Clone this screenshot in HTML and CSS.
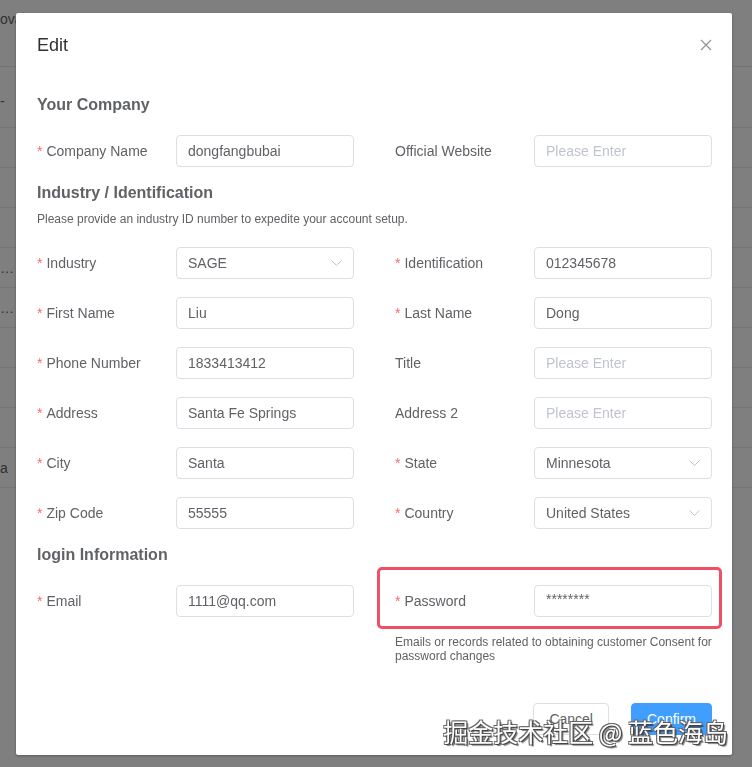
FILE: index.html
```html
<!DOCTYPE html>
<html lang="en">
<head>
<meta charset="utf-8">
<title>Edit customer</title>
<link rel="stylesheet" href="styles.css">
</head>
<body>
  <!-- list page behind the dialog -->
  <div class="page">
    <div class="list-row list-head"><span class="cell">ova</span></div>
    <div class="list-row list-tall"><span class="cell">-</span></div>
    <div class="list-row"><span class="cell"></span></div>
    <div class="list-row"><span class="cell"></span></div>
    <div class="list-row"><span class="cell"></span></div>
    <div class="list-row"><span class="cell">…</span></div>
    <div class="list-row"><span class="cell">…</span></div>
    <div class="list-row"><span class="cell"></span></div>
    <div class="list-row"><span class="cell"></span></div>
    <div class="list-row"><span class="cell"></span></div>
    <div class="list-row"><span class="cell">a</span></div>
  </div>

  <div class="mask">
    <div class="dialog">
      <div class="dialog-header">
        <span class="dialog-title">Edit</span>
        <button class="dialog-close" type="button" aria-label="Close">
          <svg width="12" height="12" viewBox="0 0 12 12"><path d="M1 1 L11 11 M11 1 L1 11" stroke="#909399" stroke-width="1.2" fill="none"/></svg>
        </button>
      </div>

      <div class="dialog-body">
        <h3 class="section-title">Your Company</h3>
        <div class="form-grid gap-19">
          <div class="field">
            <label class="field-label required">Company Name</label>
            <input class="input" type="text" value="dongfangbubai" readonly>
          </div>
          <div class="field">
            <label class="field-label">Official Website</label>
            <input class="input" type="text" placeholder="Please Enter" readonly>
          </div>
        </div>

        <h3 class="section-title mt-15">Industry / Identification</h3>
        <p class="section-desc">Please provide an industry ID number to expedite your account setup.</p>
        <div class="form-grid gap-20">
          <div class="field">
            <label class="field-label required">Industry</label>
            <div class="select">
              <input class="input" type="text" value="SAGE" readonly>
              <svg class="select-arrow" width="11" height="6" viewBox="0 0 11 6"><path d="M0.5 0.5 L5.5 5.5 L10.5 0.5" stroke="#c0c4cc" stroke-width="1" fill="none"/></svg>
            </div>
          </div>
          <div class="field">
            <label class="field-label required">Identification</label>
            <input class="input" type="text" value="012345678" readonly>
          </div>

          <div class="field">
            <label class="field-label required">First Name</label>
            <input class="input" type="text" value="Liu" readonly>
          </div>
          <div class="field">
            <label class="field-label required">Last Name</label>
            <input class="input" type="text" value="Dong" readonly>
          </div>

          <div class="field">
            <label class="field-label required">Phone Number</label>
            <input class="input" type="text" value="1833413412" readonly>
          </div>
          <div class="field">
            <label class="field-label">Title</label>
            <input class="input" type="text" placeholder="Please Enter" readonly>
          </div>

          <div class="field">
            <label class="field-label required">Address</label>
            <input class="input" type="text" value="Santa Fe Springs" readonly>
          </div>
          <div class="field">
            <label class="field-label">Address 2</label>
            <input class="input" type="text" placeholder="Please Enter" readonly>
          </div>

          <div class="field">
            <label class="field-label required">City</label>
            <input class="input" type="text" value="Santa" readonly>
          </div>
          <div class="field">
            <label class="field-label required">State</label>
            <div class="select">
              <input class="input" type="text" value="Minnesota" readonly>
              <svg class="select-arrow" width="11" height="6" viewBox="0 0 11 6"><path d="M0.5 0.5 L5.5 5.5 L10.5 0.5" stroke="#c0c4cc" stroke-width="1" fill="none"/></svg>
            </div>
          </div>

          <div class="field">
            <label class="field-label required">Zip Code</label>
            <input class="input" type="text" value="55555" readonly>
          </div>
          <div class="field">
            <label class="field-label required">Country</label>
            <div class="select">
              <input class="input" type="text" value="United States" readonly>
              <svg class="select-arrow" width="11" height="6" viewBox="0 0 11 6"><path d="M0.5 0.5 L5.5 5.5 L10.5 0.5" stroke="#c0c4cc" stroke-width="1" fill="none"/></svg>
            </div>
          </div>
        </div>

        <h3 class="section-title mt-15">login Information</h3>
        <div class="form-grid gap-19">
          <div class="field field-top">
            <label class="field-label required">Email</label>
            <input class="input" type="text" value="1111@qq.com" readonly>
          </div>
          <div class="cell-stack">
            <div class="field">
              <label class="field-label required">Password</label>
              <input class="input input-secret" type="text" value="********" readonly>
            </div>
            <p class="field-hint">Emails or records related to obtaining customer Consent for password changes</p>
            <div class="highlight-box"></div>
          </div>
        </div>
      </div>

      <div class="dialog-footer">
        <button class="btn" type="button">Cancel</button>
        <button class="btn btn-primary" type="button">Confirm</button>
      </div>
    </div>
  </div>

  <div class="watermark">掘金技术社区 @ 蓝色海岛</div>
</body>
</html>
```

FILE: styles.css
```css
* {
  box-sizing: border-box;
}

html, body {
  margin: 0;
  padding: 0;
  width: 752px;
  height: 767px;
  overflow: hidden;
  background: #ffffff;
  font-family: "Liberation Sans", Arial, sans-serif;
}

/* list page underneath */
.page {
  width: 752px;
}

.list-row {
  height: 40px;
  border-bottom: 1px solid #e6e8ee;
  display: flex;
  align-items: center;
  font-size: 14px;
  color: #606266;
}

.list-head {
  height: 67px;
  align-items: flex-start;
  padding-top: 11px;
}

.list-tall {
  height: 61px;
  padding-top: 8px;
}

.cell {
  padding-left: 0;
  white-space: nowrap;
}

/* modal mask */
.mask {
  position: fixed;
  inset: 0;
  background: rgba(0, 0, 0, 0.5);
  padding: 13px 0 0 16px;
}

.dialog {
  width: 716px;
  background: #ffffff;
  border-radius: 2px;
  box-shadow: 0 1px 3px rgba(0, 0, 0, 0.3);
}

.dialog-header {
  display: flex;
  justify-content: space-between;
  align-items: center;
  padding: 20px 20px 10px 21px;
}

.dialog-title {
  font-size: 18px;
  line-height: 24px;
  color: #303133;
}

.dialog-close {
  border: 0;
  background: none;
  padding: 0;
  width: 12px;
  height: 12px;
  display: flex;
}

.dialog-body {
  padding: 27px 20px 0 21px;
}

.section-title {
  margin: 0;
  font-size: 16px;
  line-height: 22px;
  font-weight: bold;
  color: #606266;
}

.mt-15 {
  margin-top: 15px;
}

.section-desc {
  margin: 7px 0 0;
  font-size: 12px;
  line-height: 16px;
  color: #606266;
}

.form-grid {
  display: grid;
  grid-template-columns: 317px 317px;
  column-gap: 41px;
  row-gap: 18px;
}

.gap-19 {
  margin-top: 19px;
}

.gap-20 {
  margin-top: 20px;
}

.field {
  display: flex;
  align-items: center;
  height: 32px;
}

.field-top {
  align-self: start;
}

.field-label {
  flex: none;
  width: 139px;
  font-size: 14px;
  line-height: 32px;
  color: #606266;
}

.field-label.required::before {
  content: "*";
  color: #f56c6c;
  margin-right: 4px;
}

.input {
  flex: 1;
  min-width: 0;
  width: 100%;
  height: 32px;
  border: 1px solid #dcdfe6;
  border-radius: 4px;
  padding: 0 11px;
  font-family: "Liberation Sans", Arial, sans-serif;
  font-size: 14px;
  color: #606266;
  background: #ffffff;
  outline: none;
}

.input::placeholder {
  color: #c0c4cc;
}

.input-secret {
  padding-bottom: 5px;
}

.select {
  position: relative;
  flex: 1;
  display: flex;
}

.select .input {
  padding-right: 30px;
}

.select-arrow {
  position: absolute;
  right: 12px;
  top: 13px;
}

.cell-stack {
  position: relative;
}

.field-hint {
  margin: 18px 0 0;
  font-size: 12px;
  line-height: 14px;
  color: #606266;
}

/* red outline drawn around the password field */
.highlight-box {
  position: absolute;
  top: -18px;
  left: -18px;
  right: -10px;
  height: 62px;
  border: 3px solid #ef5066;
  border-radius: 5px;
  pointer-events: none;
}

.dialog-footer {
  display: flex;
  justify-content: flex-end;
  padding: 40px 20px 20px;
}

.btn {
  height: 32px;
  padding: 0 15px;
  border: 1px solid #dcdfe6;
  border-radius: 4px;
  background: #ffffff;
  font-family: "Liberation Sans", Arial, sans-serif;
  font-size: 14px;
  color: #606266;
}

.btn-primary {
  margin-left: 22px;
  background: #409eff;
  border-color: #409eff;
  color: #ffffff;
}

.watermark {
  position: absolute;
  right: 24px;
  top: 714px;
  font-family: "Noto Sans CJK SC", sans-serif;
  font-size: 25px;
  line-height: 34px;
  color: #ffffff;
  text-shadow:
    1px 1px 0 #444,
    -1px -1px 0 #666,
    1px -1px 0 #666,
    -1px 1px 0 #666,
    2px 2px 1px rgba(0, 0, 0, 0.5);
}
```
